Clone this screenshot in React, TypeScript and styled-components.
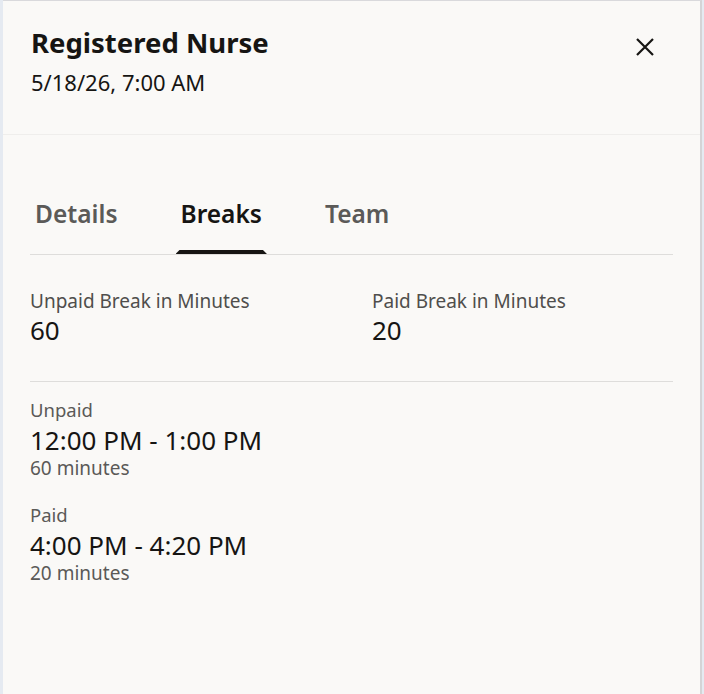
import React, { useState } from "react";
import styled, { createGlobalStyle } from "styled-components";

const GlobalStyle = createGlobalStyle`
  html, body {
    margin: 0;
    padding: 0;
    background: #e5eaf1;
  }
  body {
    font-family: "Noto Sans", "Open Sans", sans-serif;
    color: #161513;
  }
`;

const Panel = styled.div`
  margin-left: 3px;
  width: 697px;
  height: 693px;
  background: #faf9f7;
  border-top: 1px solid #d9d9dc;
  border-right: 2px solid #d4d4d6;
  display: flex;
  flex-direction: column;
`;

const Header = styled.div`
  height: 134px;
  box-sizing: border-box;
  padding: 26px 28px 0 28px;
  display: flex;
  justify-content: space-between;
  align-items: flex-start;
  border-bottom: 1px solid #efeeec;
`;

const Title = styled.h1`
  margin: 0;
  font-size: 27.5px;
  font-weight: 700;
  line-height: 32px;
`;

const SubTitle = styled.div`
  margin-top: 10px;
  font-size: 22px;
  line-height: 26px;
`;

const CloseButton = styled.button`
  border: 0;
  background: transparent;
  padding: 0;
  margin: 8px 15px 0 0;
  width: 24px;
  height: 24px;
  display: flex;
  align-items: center;
  justify-content: center;
  cursor: pointer;
  color: #161513;
`;

const Body = styled.div`
  padding: 0 27px;
`;

const TabList = styled.div`
  margin-top: 50px;
  display: flex;
  border-bottom: 1px solid #dedddb;
`;

const Tab = styled.button<{ $active?: boolean }>`
  position: relative;
  border: 0;
  background: transparent;
  font-family: inherit;
  font-size: 24.5px;
  line-height: 30px;
  font-weight: 600;
  color: ${(p) => (p.$active ? "#161513" : "#5b5a58")};
  padding: 14px 5px 25px;
  margin-right: 53px;
  cursor: pointer;

  &::after {
    content: "";
    display: ${(p) => (p.$active ? "block" : "none")};
    position: absolute;
    left: 0;
    right: 0;
    bottom: 0;
    height: 4px;
    background: #161513;
    clip-path: polygon(4px 0, calc(100% - 4px) 0, 100% 100%, 0 100%);
  }
`;

const Summary = styled.div`
  display: grid;
  grid-template-columns: 342px 1fr;
  padding: 34px 0 36px;
  border-bottom: 1px solid #dedddb;
`;

const Field = styled.div`
  display: flex;
  flex-direction: column;
`;

const FieldLabel = styled.div`
  font-size: 19px;
  line-height: 24px;
  color: #4f4e4c;
`;

const FieldValue = styled.div`
  font-size: 26px;
  line-height: 30px;
  margin-top: 2px;
`;

const BreakList = styled.div`
  padding-top: 17px;
  display: flex;
  flex-direction: column;
  gap: 24px;
`;

const BreakItem = styled.div`
  display: flex;
  flex-direction: column;
`;

const BreakType = styled.div`
  font-size: 18.5px;
  line-height: 22px;
  color: #5b5a58;
`;

const BreakTime = styled.div`
  font-size: 26px;
  line-height: 30px;
  margin-top: 4px;
`;

const BreakDuration = styled.div`
  font-size: 19px;
  line-height: 24px;
  margin-top: 1px;
  color: #5b5a58;
`;

const tabs = ["Details", "Breaks", "Team"];

const breaks = [
  { type: "Unpaid", time: "12:00 PM - 1:00 PM", duration: "60 minutes" },
  { type: "Paid", time: "4:00 PM - 4:20 PM", duration: "20 minutes" },
];

export default function App() {
  const [active, setActive] = useState("Breaks");
  return (
    <>
      <GlobalStyle />
      <Panel>
        <Header>
          <div>
            <Title>Registered Nurse</Title>
            <SubTitle>5/18/26, 7:00 AM</SubTitle>
          </div>
          <CloseButton aria-label="Close">
            <svg width="20" height="20" viewBox="0 0 20 20">
              <path d="M2 2 L18 18 M18 2 L2 18" stroke="currentColor" strokeWidth="2.2" />
            </svg>
          </CloseButton>
        </Header>
        <Body>
          <TabList>
            {tabs.map((t) => (
              <Tab key={t} $active={t === active} onClick={() => setActive(t)}>
                {t}
              </Tab>
            ))}
          </TabList>
          <Summary>
            <Field>
              <FieldLabel>Unpaid Break in Minutes</FieldLabel>
              <FieldValue>60</FieldValue>
            </Field>
            <Field>
              <FieldLabel>Paid Break in Minutes</FieldLabel>
              <FieldValue>20</FieldValue>
            </Field>
          </Summary>
          <BreakList>
            {breaks.map((b) => (
              <BreakItem key={b.type}>
                <BreakType>{b.type}</BreakType>
                <BreakTime>{b.time}</BreakTime>
                <BreakDuration>{b.duration}</BreakDuration>
              </BreakItem>
            ))}
          </BreakList>
        </Body>
      </Panel>
    </>
  );
}
